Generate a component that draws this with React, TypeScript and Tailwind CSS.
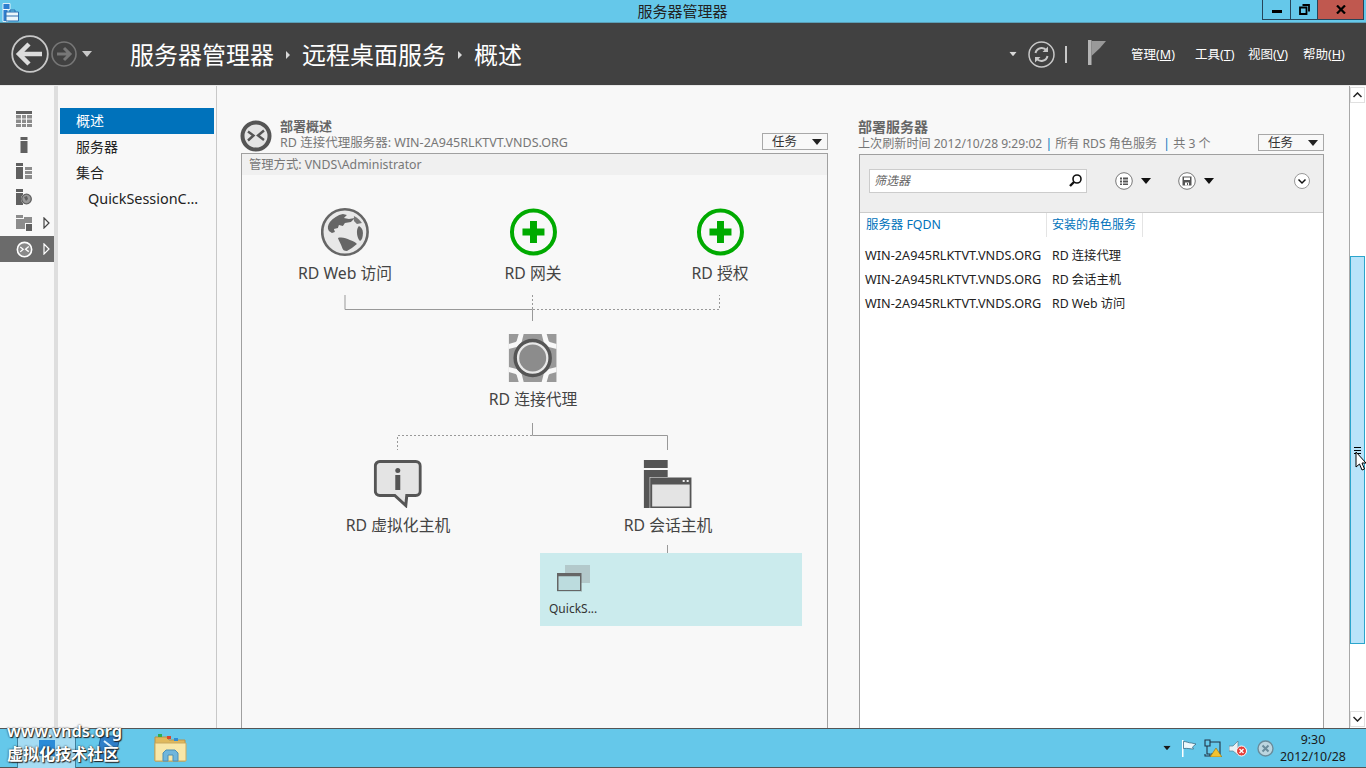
import React from "react";

const Tri = ({ className = "" }: { className?: string }) => (
  <svg width="10" height="6" viewBox="0 0 10 6" className={className}><path d="M0 0H10L5 6Z" fill="currentColor" /></svg>
);

const RdsGlyph = ({ color = "#555", stroke = "#555", fill = "#e4e4e4", size = 32, ring = 4 }: { color?: string; stroke?: string; fill?: string; size?: number; ring?: number }) => (
  <svg width={size} height={size} viewBox="0 0 32 32">
    <circle cx="16" cy="16" r="13.500" fill={fill} stroke={stroke} strokeWidth={ring} />
    <path d="M8 11.500l5.500 4-5.500 5M24 10.500l-6 5 6 4.500" fill="none" stroke={color} strokeWidth="2.400" />
  </svg>
);

const RailIcon = ({ k }: { k: number }) => {
  const d = "#606060", m = "#8c8c8c";
  if (k === 0)
    return (
      <svg width="16" height="16" viewBox="0 0 16 16">
        <rect width="16" height="3" fill={d} />
        <path d="M0 4h5v3.500H0zM6 4h4v3.500H6zM11 4h5v3.500h-5zM0 8.500h5V12H0zM6 8.500h4V12H6zM11 8.500h5V12h-5zM0 13h5v3H0zM6 13h4v3H6zM11 13h5v3h-5z" fill={m} />
      </svg>
    );
  if (k === 1)
    return (
      <svg width="16" height="16" viewBox="0 0 16 16"><rect x="4.500" width="7" height="3" fill={d} /><rect x="4.500" y="4" width="7" height="12" fill={d} /></svg>
    );
  if (k === 2)
    return (
      <svg width="16" height="16" viewBox="0 0 16 16"><rect width="7" height="3" fill={d} /><rect y="4" width="7" height="12" fill={d} /><path d="M9 4h7v3H9zM9 8h7v3H9zM9 12h7v4H9z" fill={m} /></svg>
    );
  if (k === 3)
    return (
      <svg width="16" height="16" viewBox="0 0 16 16"><rect width="7" height="3" fill={d} /><rect y="4" width="7" height="12" fill={d} /><circle cx="10.500" cy="10" r="5.500" fill="#f8f8f8" /><circle cx="10.500" cy="10" r="4.800" fill="#999" stroke={d} strokeWidth="1.300" /><path d="M8 8l3-1 1 3-2 2z" fill={d} /></svg>
    );
  return (
    <svg width="16" height="16" viewBox="0 0 16 16"><rect width="7" height="3" fill={m} /><rect y="4" width="16" height="10" fill={m} /><rect x="8" y="2" width="8" height="2" fill={m} /><rect x="9" y="8" width="7" height="8" fill="#f8f8f8" /><rect x="10" y="9" width="6" height="7" fill={d} /></svg>
  );
};

const Expand = ({ light = false }: { light?: boolean }) => (
  <svg width="7" height="12" viewBox="0 0 7 12"><path d="M1 1l5 5-5 5z" fill="none" stroke={light ? "#fff" : "#444"} strokeWidth="1.200" /></svg>
);

const TaskBtn = () => (
  <div className="w-[66px] h-[17px] border border-[#a8a8a8] flex items-center justify-between pl-[9px] pr-[5px] pt-[2px] text-[12.5px] text-[#333] bg-[#f8f8f8]">
    <span>任务</span>
    <Tri className="text-[#222] -mt-[2px]" />
  </div>
);

const Globe = () => (
  <svg width="48" height="48" viewBox="0 0 48 48">
    <circle cx="24" cy="24" r="22.700" fill="#e8e8e8" stroke="#666" strokeWidth="2.600" />
    <path d="M8 23c-2-3-1-6 1-9 3-4 8-7 13-8l4 1-3 3 5 1 6-1-4 4-6 1-2 3-4-1-1 3-4 1 1 3-3 1-3-2z" fill="#666" />
    <path d="M33 8c4 2 6 4 8 7l-5 1-3-3z" fill="#777" />
    <path d="M38 18c2 1 4 3 4 7 0 4-1 7-3 8-2-2-3-6-3-9 0-3 1-5 2-6z" fill="#666" />
    <path d="M17 30c4-1 8 0 12 2 4 1 6 3 7 4l-5 4-5 3c-3 0-4-1-5-4-1-3-3-6-4-9z" fill="#666" />
  </svg>
);

const PlusCircle = () => (
  <svg width="48" height="48" viewBox="0 0 48 48">
    <circle cx="24" cy="24" r="21.500" fill="#f8f8f8" stroke="#00aa00" strokeWidth="4" />
    <path d="M20.500 13h7v7.500H35v7h-7.500V35h-7v-7.500H13v-7h7.500z" fill="#00aa00" />
  </svg>
);

const Broker = () => (
  <svg width="48" height="48" viewBox="0 0 48 48">
    <rect width="48" height="48" fill="#999" />
    <g fill="#f8f8f8">
      <path d="M10 0h5l-2 8-5 5-8 2v-5l7-2 1-1z" />
      <path d="M38 0h-5l2 8 5 5 8 2v-5l-7-2-1-1z" />
      <path d="M10 48h5l-2-8-5-5-8-2v5l7 2 1 1z" />
      <path d="M38 48h-5l2-8 5-5 8-2v5l-7 2-1 1z" />
    </g>
    <circle cx="24" cy="24" r="17.500" fill="#e8e8e8" stroke="#555" strokeWidth="3.500" />
    <circle cx="24" cy="24" r="13.500" fill="#8c8c8c" />
  </svg>
);

const Bubble = () => (
  <svg width="48" height="48" viewBox="0 0 48 48">
    <path d="M6 1.500h36a4.500 4.500 0 0 1 4.500 4.500v25a4.500 4.500 0 0 1-4.500 4.500H33l-1 10L21 35.500H6A4.500 4.500 0 0 1 1.500 31V6A4.500 4.500 0 0 1 6 1.500z" fill="#e4e4e4" stroke="#555" strokeWidth="3" />
    <circle cx="24" cy="10.500" r="2.500" fill="#555" />
    <rect x="21.500" y="15" width="5" height="15" fill="#555" />
  </svg>
);

const Session = () => (
  <svg width="48" height="48" viewBox="0 0 48 48">
    <rect width="24" height="8" fill="#555" />
    <rect y="10" width="24" height="38" fill="#555" />
    <rect x="6" y="17" width="42" height="31" fill="#f8f8f8" />
    <rect x="7.500" y="18.500" width="39.500" height="29" fill="#e4e4e4" stroke="#555" strokeWidth="2" />
    <rect x="7.500" y="18.500" width="39.500" height="6" fill="#555" />
    <path d="M39 20h2v2h-2zM43 20h2v2h-2z" fill="#f0f0f0" />
  </svg>
);

const MiniSession = () => (
  <svg width="33" height="27" viewBox="0 0 33 27">
    <rect x="8" width="25" height="18" fill="#b3c9cb" />
    <rect x="0.750" y="8.750" width="23" height="17" fill="#bcdcde" stroke="#666" strokeWidth="1.500" />
    <rect x="0.750" y="8.750" width="23" height="2.500" fill="#666" />
    <rect x="0" y="26" width="24" height="1" fill="#b3d5d7" />
  </svg>
);

const Node = ({ icon, label, center, box }: { icon: React.ReactNode; label: string; center: string; box: string }) => (
  <div className={`absolute -translate-x-1/2 flex flex-col items-center whitespace-nowrap text-[15.8px] leading-[20px] text-[#444] ${center} ${box}`}>
    {icon}
    <div className="mt-[7px]">{label}</div>
  </div>
);

const Menu = ({ a, b, w }: { a: string; b: string; w: string }) => (
  <span className={`text-[12.5px] text-white whitespace-nowrap ${w}`}>
    {a}(<span className="underline">{b}</span>)
  </span>
);

export default function App() {
  return (
    <div className="relative w-[1366px] h-[768px] overflow-hidden flex flex-col bg-[#f8f8f8] font-['Noto_Sans','Noto_Sans_CJK_SC',sans-serif] text-[12px]">
      {/* title bar */}
      <div className="relative h-[23px] shrink-0 bg-[#65c8ea] border-b border-[#5a9fb8] flex items-center justify-center">
        <svg width="18" height="19" viewBox="0 0 18 19" className="absolute left-[2px] top-[3px]">
          <path d="M1 .5h7v6H1zM1 6.500h5v12H1z" fill="#2d7fd0" stroke="#fff" strokeWidth=".8" />
          <path d="M4 9h12.500v9H4z" fill="#eaf6fb" stroke="#2d6fb0" />
          <path d="M8 9V7h5v2M4 13h13" fill="none" stroke="#2d6fb0" />
        </svg>
        <span className="text-[15px] text-[#222] pr-[1px]">服务器管理器</span>
        <div className="absolute right-[2px] top-0 h-[20px] flex border border-t-0 border-[#26455a]">
          <div className="w-[28px] flex items-center justify-center border-r border-[#26455a]">
            <div className="w-[10px] h-[3px] bg-black mt-[4px]" />
          </div>
          <div className="w-[26px] flex items-center justify-center">
            <svg width="11" height="11" viewBox="0 0 11 11"><path d="M3.500 1h6.500v6.500M1 3.500h6.500V10H1z" fill="none" stroke="#000" strokeWidth="1.800" /></svg>
          </div>
          <div className="w-[46px] flex items-center justify-center bg-[#c0584f] border-l border-[#26455a]">
            <svg width="10" height="9" viewBox="0 0 10 9"><path d="M1 .5l8 8M9 .5l-8 8" stroke="#000" strokeWidth="2.200" /></svg>
          </div>
        </div>
      </div>

      {/* header */}
      <div className="h-[62px] shrink-0 bg-[#414141] flex items-center">
        <div className="w-[130px] shrink-0 flex items-center pl-[11px]">
          <svg width="38" height="38" viewBox="0 0 38 38">
            <circle cx="19" cy="19" r="17.800" fill="none" stroke="#c8c8c8" strokeWidth="1.800" />
            <path d="M8 19h23M18 9L8 19l10 10" fill="none" stroke="#dcdcdc" strokeWidth="4.500" />
          </svg>
          <svg width="26" height="26" viewBox="0 0 26 26" className="ml-[2px]">
            <circle cx="13" cy="13" r="12" fill="none" stroke="#777" strokeWidth="1.600" />
            <path d="M6 13h13M13 7l6 6-6 6" fill="none" stroke="#777" strokeWidth="3" />
          </svg>
          <Tri className="text-[#c8c8c8] ml-[5px]" />
        </div>
        <div className="flex items-center text-[24px] text-white whitespace-nowrap mt-[2px]">
          <span>服务器管理器</span>
          <svg width="4" height="8" viewBox="0 0 4 8" className="mx-[12px] mb-[1px]"><path d="M0 0l4 4-4 4z" fill="#d8d8d8" /></svg>
          <span>远程桌面服务</span>
          <svg width="4" height="8" viewBox="0 0 4 8" className="mx-[12px] mb-[1px]"><path d="M0 0l4 4-4 4z" fill="#d8d8d8" /></svg>
          <span>概述</span>
        </div>
        <div className="flex-1" />
        <Tri className="text-[#d8d8d8] scale-75" />
        <svg width="27" height="27" viewBox="0 0 27 27" className="ml-[10px]">
          <circle cx="13.500" cy="13.500" r="12.500" fill="none" stroke="#c8c8c8" strokeWidth="1.500" />
          <path d="M7.500 12a6.200 6.200 0 0 1 11-2.500M19.500 15a6.200 6.200 0 0 1-11 2.500" fill="none" stroke="#c8c8c8" strokeWidth="2" />
          <path d="M20 5.500v5.500h-5.500zM7 21.500V16h5.500z" fill="#c8c8c8" />
        </svg>
        <div className="w-[2px] h-[17px] bg-[#c8c8c8] ml-[10px]" />
        <svg width="18" height="25" viewBox="0 0 18 25" className="ml-[21px] mb-[4px]">
          <path d="M0 0h3.500v25H0z" fill="#b4b4b4" />
          <path d="M3.500 1H18l-6 7-8.500 8z" fill="#999" />
        </svg>
        <div className="w-[260px] shrink-0 flex items-center pl-[25px] mt-[2px]">
          <Menu a="管理" b="M" w="w-[64px]" />
          <Menu a="工具" b="T" w="w-[53px]" />
          <Menu a="视图" b="V" w="w-[55px]" />
          <Menu a="帮助" b="H" w="w-[42px]" />
        </div>
      </div>

      {/* body */}
      <div className="flex-1 min-h-0 flex border-t border-[#e8e8e8]">
        {/* icon rail */}
        <div className="w-[54px] shrink-0 pt-[20px] flex flex-col">
          {[0, 1, 2, 3, 4, 5].map((k) => (
            <div key={k} className={`h-[26px] flex items-center pl-[16px] ${k === 5 ? "bg-[#6b6b6b]" : ""}`}>
              {k === 5 ? <RdsGlyph size={17} fill="#8a8a8a" stroke="#fff" color="#fff" ring={3} /> : <RailIcon k={k} />}
              {k >= 4 && (
                <span className={k === 5 ? "ml-[10px]" : "ml-[11px]"}>
                  <Expand light={k === 5} />
                </span>
              )}
            </div>
          ))}
        </div>
        <div className="w-[4px] shrink-0 bg-[#dedede]" />

        {/* nav */}
        <div className="w-[159px] shrink-0 border-r border-[#c8c8c8] pt-[22px] pl-[2px] pr-[2px] text-[14px] text-[#222]">
          <div className="h-[26px] flex items-center pl-[16px] pb-[2px] bg-[#0072bb] text-white">概述</div>
          <div className="h-[26px] flex items-center pl-[16px] pb-[2px]">服务器</div>
          <div className="h-[26px] flex items-center pl-[16px] pb-[2px]">集合</div>
          <div className="h-[26px] flex items-center pl-[28px] text-[14.4px]">QuickSessionC...</div>
        </div>

        {/* main */}
        <div className="flex-1 min-w-0 flex pl-[24px] gap-[31px]">
          {/* left section */}
          <div className="w-[587px] shrink-0 flex flex-col pt-[33px]">
            <div className="h-[34px] shrink-0 flex relative">
              <div className="-ml-[1px] shrink-0 mt-[1px]"><RdsGlyph /></div>
              <div className="ml-[8px] flex-1 leading-[16px] text-[#777] text-[12.5px]">
                <div className="font-semibold text-[#666] text-[13px] -mt-[1px]">部署概述</div>
                <div className="mt-[1px]">RD 连接代理服务器: WIN-2A945RLKTVT.VNDS.ORG</div>
              </div>
              <div className="mt-[14px]"><TaskBtn /></div>
            </div>
            <div className="relative flex-1 min-h-0 border border-b-0 border-[#a0a0a0] bg-[#f8f8f8] overflow-hidden">
              <div className="h-[21px] bg-[#f0f0f0] flex items-center pl-[7px] pt-[2px] text-[#777] text-[12.3px]">管理方式: VNDS\Administrator</div>
              {/* diagram canvas */}
              <svg width="586" height="574" viewBox="242 154 586 574" className="absolute left-0 top-0" fill="none">
                <path d="M345 295V309.500H532.500V321" stroke="#999" />
                <path d="M532.500 295V309M533 309.500H719.500V295" stroke="#999" strokeDasharray="2 2" />
                <path d="M532.500 423V435.500H667.500V450M667.500 545V553" stroke="#999" />
                <path d="M532 435.500H397.500V450" stroke="#999" strokeDasharray="2 2" />
              </svg>
              <Node icon={<Globe />} label="RD Web 访问" center="left-[103px]" box="top-[54px]" />
              <Node icon={<PlusCircle />} label="RD 网关" center="left-[291px]" box="top-[54px]" />
              <Node icon={<PlusCircle />} label="RD 授权" center="left-[478px]" box="top-[54px]" />
              <Node icon={<Broker />} label="RD 连接代理" center="left-[291px]" box="top-[180px]" />
              <Node icon={<Bubble />} label="RD 虚拟化主机" center="left-[156px]" box="top-[306px]" />
              <Node icon={<Session />} label="RD 会话主机" center="left-[426px]" box="top-[306px]" />
              <div className="absolute left-[298px] top-[399px] w-[262px] h-[73px] bg-[#cbebed] text-[#333]">
                <div className="absolute left-[17px] top-[12px]"><MiniSession /></div>
                <div className="absolute left-[9px] top-[48px] leading-[16px]">QuickS...</div>
              </div>
            </div>
          </div>

          {/* right section */}
          <div className="w-[465px] shrink-0 flex flex-col pt-[33px]">
            <div className="h-[35px] shrink-0 flex">
              <div className="flex-1 -ml-[1px] leading-[16px] text-[#777]">
                <div className="font-semibold text-[#666] text-[14px]">部署服务器</div>
                <div className="text-[12.1px] whitespace-nowrap mt-[1px]">上次刷新时间 2012/10/28 9:29:02 <span className="text-[#0072bb]">|</span> 所有 RDS 角色服务 &nbsp;<span className="text-[#0072bb]">|</span> 共 3 个</div>
              </div>
              <div className="mt-[15px]"><TaskBtn /></div>
            </div>
            <div className="flex-1 min-h-0 border border-b-0 border-[#a0a0a0] bg-white flex flex-col overflow-hidden">
              <div className="h-[58px] shrink-0 bg-[#eeeeee] border-b border-[#cccccc] flex items-center pl-[9px] pr-[13px] pb-[6px]">
                <div className="w-[218px] h-[24px] bg-white border border-[#cccccc] flex items-center justify-between pl-[4px] pr-[3px]">
                  <span className="italic text-[#666]">筛选器</span>
                  <svg width="15" height="15" viewBox="0 0 15 15"><circle cx="9" cy="6" r="4" fill="none" stroke="#111" strokeWidth="1.600" /><path d="M6 9l-4 4" stroke="#111" strokeWidth="2.400" /></svg>
                </div>
                <svg width="18" height="18" viewBox="0 0 18 18" className="ml-[28px] shrink-0">
                  <circle cx="9" cy="9" r="8.300" fill="#fff" stroke="#777" />
                  <path d="M5 5.500h2v2H5zM8 5.500h5v2H8zM5 8.500h2v2H5zM8 8.500h5v2H8zM5 11.500h2v1.500H5zM8 11.500h5v1.500H8z" fill="#555" />
                </svg>
                <Tri className="ml-[8px] text-[#111]" />
                <svg width="18" height="18" viewBox="0 0 18 18" className="ml-[27px] shrink-0">
                  <circle cx="9" cy="9" r="8.300" fill="#fff" stroke="#777" />
                  <path d="M4.500 4.500h9v9h-9z" fill="#555" /><rect x="6" y="5.500" width="6" height="2.500" fill="#fff" /><rect x="7" y="10.500" width="4" height="3" fill="#fff" /><rect x="9" y="11" width="1" height="2" fill="#555" />
                </svg>
                <Tri className="ml-[8px] text-[#111]" />
                <div className="flex-1" />
                <svg width="16" height="16" viewBox="0 0 16 16" className="shrink-0">
                  <circle cx="8" cy="8" r="7.500" fill="#fff" stroke="#999" />
                  <path d="M4.500 6.500L8 10l3.500-3.500" fill="none" stroke="#111" strokeWidth="1.500" />
                </svg>
              </div>
              <div className="h-[24px] shrink-0 flex text-[#0072bb]">
                <div className="w-[187px] pl-[6px] flex items-center border-r border-[#e4e4e4] text-[12.4px]">服务器 FQDN</div>
                <div className="w-[96px] pl-[5px] flex items-center border-r border-[#e4e4e4] whitespace-nowrap">安装的角色服务</div>
              </div>
              <div className="pt-[7px] text-[#222]">
                {["RD 连接代理", "RD 会话主机", "RD Web 访问"].map((r) => (
                  <div key={r} className="h-[24px] flex items-center pl-[5px]">
                    <span className="w-[187px] whitespace-nowrap text-[12.7px]">WIN-2A945RLKTVT.VNDS.ORG</span>
                    <span className="text-[12.3px]">{r}</span>
                  </div>
                ))}
              </div>
            </div>
          </div>
        </div>

        {/* scrollbar */}
        <div className="w-[17px] shrink-0 bg-white border-l border-[#a8a8a8] flex flex-col pt-[1px] pr-[1px]">
          <div className="h-[16px] shrink-0 border border-[#e0e0e0] flex items-center justify-center bg-white">
            <svg width="9" height="6" viewBox="0 0 9 6"><path d="M.5 5l4-4 4 4" fill="none" stroke="#222" strokeWidth="1.500" /></svg>
          </div>
          <div className="h-[153px] shrink-0" />
          <div className="h-[388px] shrink-0 bg-[#b9e3f9] border border-[#2ba5cc] flex items-center justify-center">
            <div className="w-[7px] h-[7px] flex flex-col justify-between">
              <div className="h-[1px] bg-black" /><div className="h-[1px] bg-black" /><div className="h-[1px] bg-black" />
            </div>
          </div>
          <div className="flex-1" />
          <div className="h-[16px] shrink-0 border border-[#e0e0e0] flex items-center justify-center bg-white mb-[1px]">
            <svg width="9" height="6" viewBox="0 0 9 6"><path d="M.5 1l4 4 4-4" fill="none" stroke="#222" strokeWidth="1.500" /></svg>
          </div>
        </div>
      </div>

      {/* taskbar */}
      <div className="relative h-[40px] shrink-0 bg-[#65c8ea] border-t border-b border-[#555] flex items-center">
        <div className="ml-[17px] w-[59px] h-[39px] bg-[#a5dcf3] border-x border-[#3f7f9c] flex items-center justify-center shrink-0">
          <div className="w-[16px] h-[16px] bg-[#2a8bd8]" />
        </div>
        <svg width="26" height="26" viewBox="0 0 26 26" className="ml-[19px] shrink-0">
          <path d="M6 1h19l-5 24H1z" fill="#2f7fc9" stroke="#1f5c96" />
          <path d="M9 6l9 7M8 17h6" stroke="#dff1fb" strokeWidth="2" />
        </svg>
        <svg width="33" height="30" viewBox="0 0 33 30" className="ml-[33px] shrink-0">
          <path d="M1 4h12l2 3h16v21H1z" fill="#e0b95c" stroke="#b8934a" />
          <rect x="4" y="1" width="4" height="3" fill="#2fae52" /><rect x="13" y="3" width="4" height="3" fill="#d8452e" /><rect x="20" y="5" width="4" height="3" fill="#2a8bd8" />
          <path d="M1 10h31v18H1z" fill="#f8e7a8" stroke="#c9a95f" />
          <path d="M9 28v-8l3-3h9l3 3v8h-5v-6h-5v6z" fill="#6fb6dc" stroke="#4d8fb6" />
        </svg>
        <div className="flex-1" />
        <Tri className="text-[#1a1a1a] scale-75 mr-[9px]" />
        <svg width="16" height="17" viewBox="0 0 16 17" className="shrink-0">
          <path d="M1 0h1.500v17H1z" fill="#fff" /><path d="M2.500 1.500c3 0 5 1.500 8 1.500l4.500 1-3.500 3 1 2c-3 0-6-1-10-.5z" fill="#eef8fc" stroke="#2f5f78" strokeWidth=".7" />
        </svg>
        <svg width="18" height="18" viewBox="0 0 18 18" className="ml-[7px] shrink-0">
          <path d="M1 1h5v6H1zM6 3h10v12H7M3 7v8h3v2H1v-2" fill="none" stroke="#234" strokeWidth="1.100" />
          <path d="M12 9l6 9H6z" fill="#f2c230" stroke="#876a10" strokeWidth=".6" />
        </svg>
        <svg width="18" height="17" viewBox="0 0 18 17" className="ml-[7px] shrink-0">
          <path d="M0 6h4l5-5v14l-5-4H0z" fill="#e7f1f6" stroke="#5c7f90" strokeWidth=".7" />
          <circle cx="12.500" cy="11" r="5" fill="#e4403a" stroke="#fff" />
          <path d="M10.500 9l4 4M14.500 9l-4 4" stroke="#fff" strokeWidth="1.300" />
        </svg>
        <svg width="17" height="17" viewBox="0 0 17 17" className="ml-[10px] shrink-0">
          <circle cx="8.500" cy="8.500" r="7.500" fill="#bcd6e0" stroke="#6a8c9b" strokeWidth="1.400" />
          <path d="M5.500 5.500l6 6M11.500 5.500l-6 6" stroke="#6a8c9b" strokeWidth="2" />
        </svg>
        <div className="w-[92px] shrink-0 flex flex-col items-center text-[12.4px] leading-[17px] text-[#1a1a1a] pr-[14px] whitespace-nowrap">
          <div>9:30</div>
          <div>2012/10/28</div>
        </div>
      </div>

      {/* watermark */}
      <div className="absolute left-[7px] top-[721px] pointer-events-none text-white font-semibold [text-shadow:1px_1px_1px_#222,0_0_2px_#222]">
        <div className="text-[16.5px] leading-[20px]">www.vnds.org</div>
        <div className="text-[16px] leading-[20px] mt-[3px]">虚拟化技术社区</div>
      </div>

      {/* mouse pointer */}
      <svg width="12" height="20" viewBox="0 0 12 20" className="absolute left-[1355px] top-[451px] pointer-events-none">
        <path d="M1 1v15l3.500-3 2.500 6 2.500-1-2.500-6H11z" fill="#fff" stroke="#000" />
      </svg>
    </div>
  );
}
